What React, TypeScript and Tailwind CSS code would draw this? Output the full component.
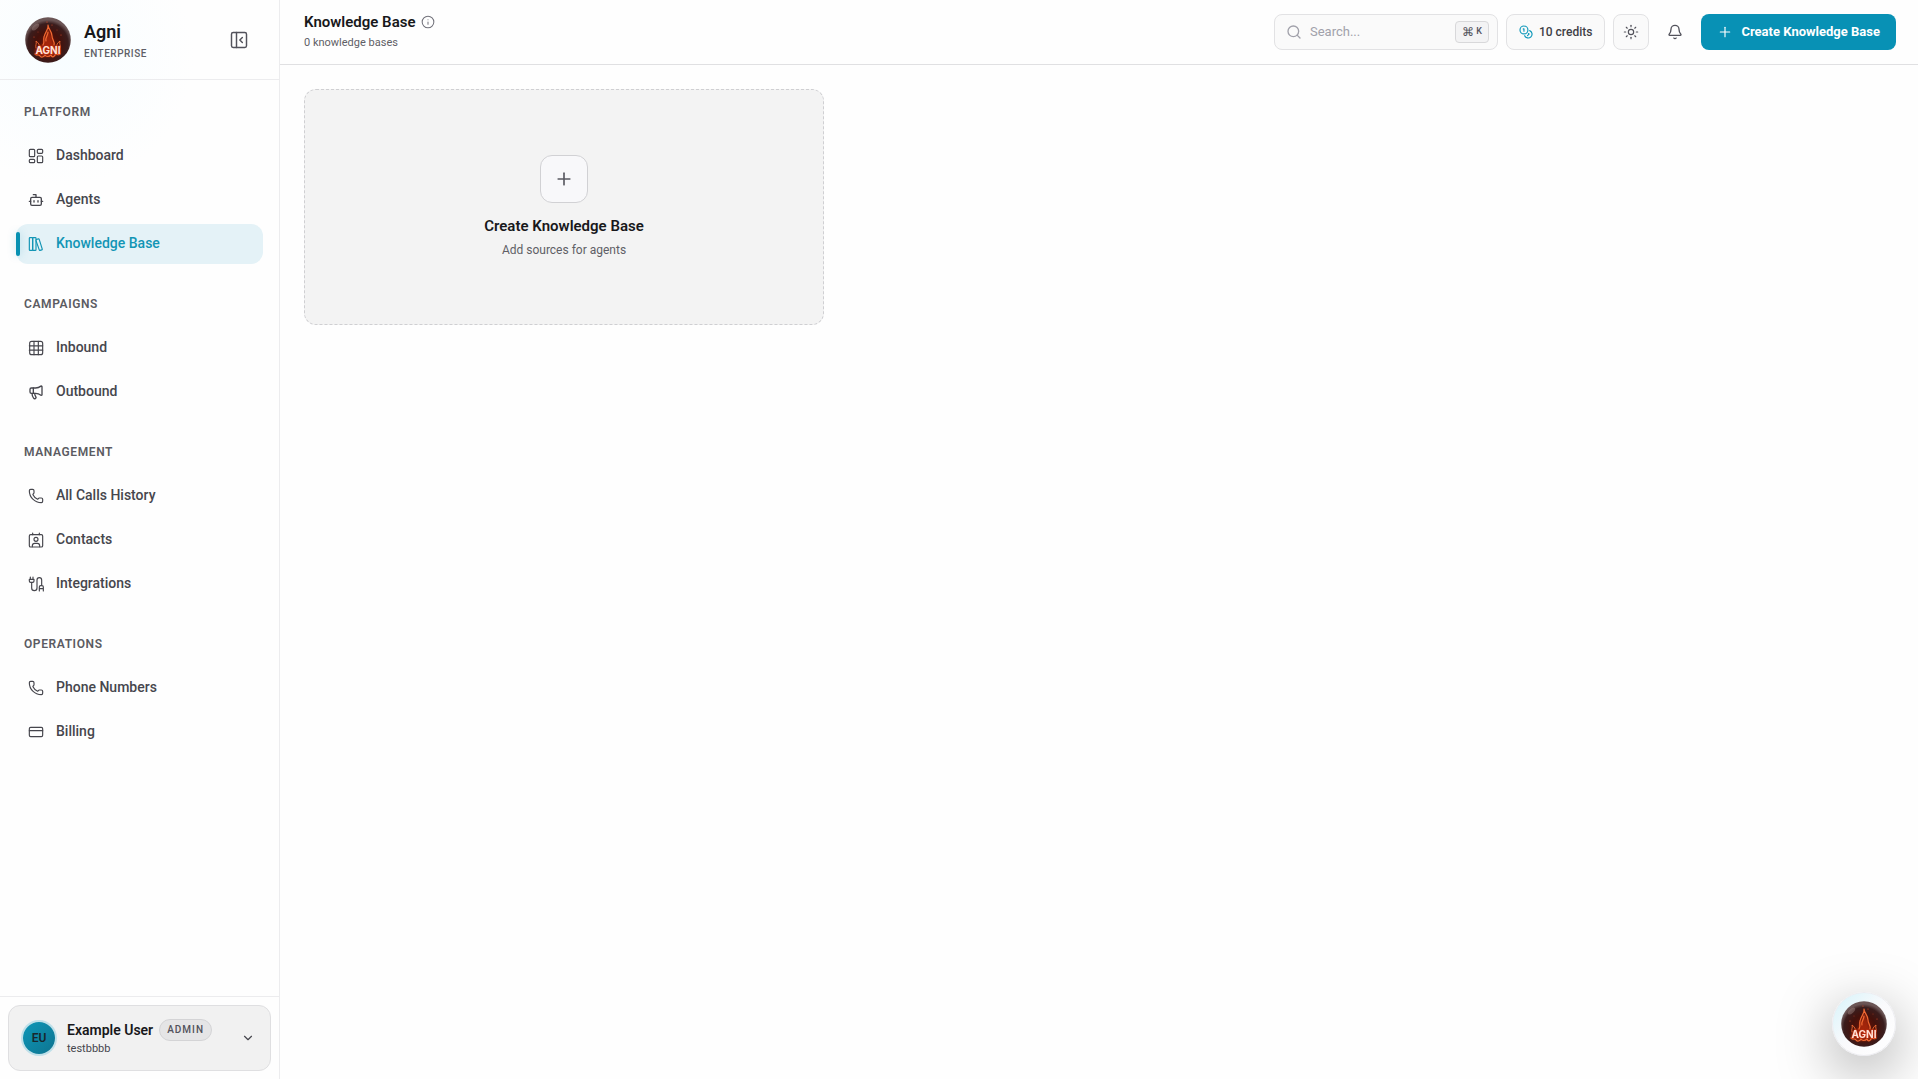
import type { ReactNode, SVGProps } from "react";
import { Bell, Bot, ChevronDown, CreditCard, Info, Megaphone, Phone, Plus, Search, Sun } from "lucide-react";

type IconProps = SVGProps<SVGSVGElement>;

function Glyph({ children, ...props }: IconProps) {
  return (
    <svg viewBox="0 0 24 24" fill="none" stroke="currentColor" strokeWidth={2} strokeLinecap="round" strokeLinejoin="round" aria-hidden="true" {...props}>
      {children}
    </svg>
  );
}

const DashboardIcon = (p: IconProps) => (
  <Glyph {...p}>
    <rect x="2" y="2" width="8" height="11" rx="1.5" />
    <rect x="14" y="2" width="8" height="6" rx="1.5" />
    <rect x="14" y="12" width="8" height="10" rx="1.5" />
    <rect x="2" y="17" width="8" height="5" rx="1.5" />
  </Glyph>
);
const BooksIcon = (p: IconProps) => (
  <Glyph {...p}>
    <rect x="2" y="2.5" width="5" height="19" rx="1" />
    <rect x="7" y="2.5" width="5" height="19" rx="1" />
    <path d="M12.3 5.2 15.6 4.3a1 1 0 0 1 1.2.7l4.6 14.6a1 1 0 0 1-.7 1.2l-2.6.7a1 1 0 0 1-1.2-.7L12 7" />
  </Glyph>
);
const GridIcon = (p: IconProps) => (
  <Glyph {...p}>
    <rect x="2.5" y="2" width="19.5" height="20" rx="3" />
    <path d="M9 2v20M15.5 2v20M2 8.7h20M2 15.3h20" />
  </Glyph>
);
const ContactIcon = (p: IconProps) => (
  <Glyph {...p}>
    <rect x="2" y="4" width="20" height="18.5" rx="2" />
    <path d="M7 1.5V4M17 1.5V4M6.5 22v-1.5a3.5 3.5 0 0 1 3.5-3.5h4a3.5 3.5 0 0 1 3.5 3.5V22" />
    <circle cx="12" cy="11" r="3" />
  </Glyph>
);
const CableIcon = (p: IconProps) => (
  <Glyph {...p}>
    <path d="M3.500 1.500V5M7.500 1.500V5M2 5h7v2.500a2 2 0 0 1-2 2H4a2 2 0 0 1-2-2zM5.500 9.500V18a4 4 0 0 0 8 0V6a3.500 3.500 0 0 1 7 0v8.500M17 22.500v-6a2 2 0 0 1 2-2h2a2 2 0 0 1 2 2v6M17 19h6" />
  </Glyph>
);
const PanelIcon = (p: IconProps) => (
  <Glyph {...p}>
    <rect x="3" y="3" width="18" height="18" rx="2" />
    <path d="M9 3v18M16 9l-3 3 3 3" />
  </Glyph>
);
const CoinsIcon = (p: IconProps) => (
  <Glyph {...p}>
    <circle cx="8.5" cy="8.5" r="6.8" />
    <path d="M7.3 6.7h1.2v4M18.3 9.6a6.6 6.6 0 1 1-8.6 8.7M16.2 14.6l1 .9-2.6 2.6" />
  </Glyph>
);

/* Round ember emblem: a dark red sphere, an outlined flame and the product name. */
function Emblem({ id, className }: { id: string; className: string }) {
  return (
    <svg viewBox="0 0 46 46" className={className} role="img" aria-label="Agni logo">
      <defs>
        <radialGradient id={id} cx="50%" cy="58%" r="52%">
          <stop offset="0" stopColor="#6b1408" />
          <stop offset="0.5" stopColor="#44110b" />
          <stop offset="0.85" stopColor="#3a1d1d" />
          <stop offset="1" stopColor="#6b5555" />
        </radialGradient>
        <filter id={id + "-glow"} x="-30%" y="-30%" width="160%" height="160%">
          <feGaussianBlur stdDeviation="1.2" />
        </filter>
      </defs>
      <circle cx="23" cy="23" r="22.8" fill={`url(#${id})`} />
      <ellipse cx="10.5" cy="10" rx="4.5" ry="2.2" fill="#a58a86" opacity="0.45" transform="rotate(-42 10.5 10)" />
      <path d="M10 37c-1-5 2-8 7-9 2-4 3-9 6-18 3 6 5 13 6 18 5 1 8 5 6 9-7 4-18 4-25 0z" fill="#e2380c" opacity="0.5" filter={`url(#${id}-glow)`} />
      <g fill="none" stroke="#f26a33" strokeWidth="1.2" strokeLinejoin="round" strokeLinecap="round">
        <path d="M23 8c1 4-3 7-4 12-1 4 1 5-1 8M23 8c0 4 4 6 4 11 0 4 3 5 2 9M23 15c0 4-3 5-2 9" />
        <path d="M11 31c-1-3 1-4 0-7 3 2 3 4 4 6M35 31c1-3-1-4 0-7-3 2-3 4-4 6" strokeWidth="0.9" />
        <path d="M10 37c2 2 4 0 5 2s4 1 5-1c1 2 4 2 6 0 1 3 3 2 4 0s4 1 5-1" />
      </g>
      <g fill="#e4502a">
        <circle cx="22" cy="5" r="0.6" /><circle cx="27" cy="8" r="0.5" /><circle cx="9" cy="20" r="0.5" />
        <circle cx="36" cy="18" r="0.5" /><circle cx="13" cy="15" r="0.4" /><circle cx="32" cy="13" r="0.4" />
      </g>
      <text x="23" y="36.5" textAnchor="middle" fontSize="10" fontWeight="700" fill="#ffe3d8" stroke="#c62f10" strokeWidth="1" paintOrder="stroke" className="font-[Inter]">AGNI</text>
    </svg>
  );
}

const ic = "size-4 shrink-0";
const groups: { title: string; items: { label: string; icon: ReactNode; active?: boolean }[] }[] = [
  {
    title: "PLATFORM",
    items: [
      { label: "Dashboard", icon: <DashboardIcon className={ic} strokeWidth={1.75} /> },
      { label: "Agents", icon: <Bot className={ic} strokeWidth={2} /> },
      { label: "Knowledge Base", icon: <BooksIcon className={ic} strokeWidth={1.75} />, active: true },
    ],
  },
  {
    title: "CAMPAIGNS",
    items: [
      { label: "Inbound", icon: <GridIcon className={ic} strokeWidth={1.75} /> },
      { label: "Outbound", icon: <Megaphone className={ic} strokeWidth={2} /> },
    ],
  },
  {
    title: "MANAGEMENT",
    items: [
      { label: "All Calls History", icon: <Phone className={ic} strokeWidth={1.75} /> },
      { label: "Contacts", icon: <ContactIcon className={ic} strokeWidth={1.75} /> },
      { label: "Integrations", icon: <CableIcon className={ic} strokeWidth={1.75} /> },
    ],
  },
  {
    title: "OPERATIONS",
    items: [
      { label: "Phone Numbers", icon: <Phone className={ic} strokeWidth={1.75} /> },
      { label: "Billing", icon: <CreditCard className={ic} strokeWidth={1.75} /> },
    ],
  },
];

function Sidebar() {
  return (
    <aside className="flex w-[280px] shrink-0 flex-col border-r border-[#ececee] bg-[radial-gradient(circle_at_64px_56px,#f8fdff_0,#fefefe_130px)]">
      <div className="flex h-20 items-center border-b border-[#ececee] pr-[30px] pl-6">
        <Emblem id="brand" className="size-12 shrink-0 p-px" />
        <div className="ml-3 flex-1">
          <p className="text-lg leading-7 font-semibold text-[#18181b]">Agni</p>
          <p className="text-[10px] leading-4 font-medium tracking-wider text-[#5f5f66]">ENTERPRISE</p>
        </div>
        <button aria-label="Collapse sidebar" className="text-[#52525b]">
          <PanelIcon className="size-5" strokeWidth={1.75} />
        </button>
      </div>
      <nav aria-label="Main" className="flex flex-1 flex-col gap-8 px-4 py-6">
        {groups.map((g) => (
          <section key={g.title}>
            <h2 className="mb-4 px-2 text-xs leading-4 font-semibold tracking-wider text-[#5b5b62]">{g.title}</h2>
            <ul className="flex flex-col gap-1">
              {g.items.map((item) => (
                <li key={item.label}>
                  <a
                    href="#"
                    aria-current={item.active ? "page" : undefined}
                    className={
                      item.active
                        ? "relative flex h-10 items-center gap-3 rounded-xl bg-[#e4f2f7] px-3 text-sm font-medium text-[#1295b5]"
                        : "flex h-10 items-center gap-3 rounded-xl px-3 text-sm font-medium text-[#46464d]"
                    }
                  >
                    {item.active && <span className="absolute top-2 bottom-2 left-0 w-1 rounded-full bg-[#0891b2] shadow-[0_0_8px_#0891b240]" />}
                    {item.icon}
                    <span className="pb-0.5">{item.label}</span>
                  </a>
                </li>
              ))}
            </ul>
          </section>
        ))}
      </nav>
      <div className="border-t border-[#ececee] p-2">
        <button className="flex h-[66px] w-full items-center rounded-xl border border-[#dfdfe1] bg-[#f1f1f1] pr-[15px] pl-3.5 text-left">
          <span className="flex size-8 shrink-0 items-center justify-center rounded-full bg-linear-to-br from-[#0c97b8] to-[#0e7490] text-xs font-semibold text-[#18272d] ring-2 ring-[#bfe0e9]">EU</span>
          <span className="ml-3 flex flex-1 flex-col">
            <span className="flex items-center gap-1.5">
              <span className="text-sm leading-5 font-semibold text-[#18181b]">Example User</span>
              <span className="rounded-full border border-[#d4d4d6] bg-[#e5e5e6] px-[7px] text-[10px] leading-5 font-medium tracking-widest text-[#52525b]">ADMIN</span>
            </span>
            <span className="text-[11px] leading-4 text-[#46464d]">testbbbb</span>
          </span>
          <ChevronDown className="size-3.5 text-[#46464d]" strokeWidth={2} />
        </button>
      </div>
    </aside>
  );
}

function Header() {
  return (
    <header className="flex h-[65px] items-center justify-between border-b border-[#e0e0e2] pr-[22px] pl-6">
      <div>
        <div className="flex items-center gap-1.5">
          <h1 className="text-[15px] leading-[22px] font-semibold text-[#18181b]">Knowledge Base</h1>
          <button aria-label="About knowledge bases" className="text-[#71717a]">
            <Info className="size-3.5" strokeWidth={1.75} />
          </button>
        </div>
        <p className="text-[11px] leading-5 text-[#5f5f66]">0 knowledge bases</p>
      </div>
      <div className="flex items-center gap-2">
        <label className="flex h-9 w-56 items-center gap-2 rounded-lg border border-[#e2e2e4] bg-[#fafafa] pr-2 pl-[11px]">
          <Search className="size-4 shrink-0 text-[#a1a1aa]" strokeWidth={2} />
          <input type="search" aria-label="Search" placeholder="Search..." className="min-w-0 flex-1 bg-transparent text-[13px] outline-none placeholder:text-[#a1a1aa]" />
          <kbd className="flex h-[22px] items-center gap-0.5 rounded-sm border border-[#d8d8da] bg-[#f3f3f4] px-1.5 font-[Roboto] text-[#52525b]">
            <span className="text-xs">⌘</span>
            <span className="text-[9px] font-medium">K</span>
          </kbd>
        </label>
        <button className="flex h-9 items-center gap-1.5 rounded-lg border border-[#e2e2e4] bg-[#fafafa] px-3 text-xs font-medium text-[#3f3f46]">
          <CoinsIcon className="size-3.5 text-[#0e98ba]" strokeWidth={2} />
          10 credits
        </button>
        <button aria-label="Toggle theme" className="flex size-9 items-center justify-center rounded-lg border border-[#e2e2e4] bg-[#fafafa] text-[#52525b]">
          <Sun className="size-4" strokeWidth={1.75} />
        </button>
        <button aria-label="Notifications" className="flex size-9 items-center justify-center text-[#52525b]">
          <Bell className="size-4" strokeWidth={2} />
        </button>
        <button className="flex h-9 items-center gap-2 rounded-lg bg-[#0891b5] px-4 text-[13px] font-bold text-white">
          <Plus className="size-4" strokeWidth={1.75} />
          Create Knowledge Base
        </button>
      </div>
    </header>
  );
}

export default function App() {
  return (
    <div className="flex min-h-screen bg-[#fefefe] font-[Roboto,sans-serif]">
      <Sidebar />
      <div className="flex min-w-0 flex-1 flex-col">
        <Header />
        <main className="grid grid-cols-3 gap-4 py-6 pr-[22px] pl-6">
          <button className="flex h-[236px] flex-col items-center justify-center rounded-xl border border-dashed border-[#cfcfd2] bg-[#f3f3f3]">
            <span className="flex size-12 items-center justify-center rounded-xl border border-[#d1d1d4] bg-[#f8f8fa] text-[#5a5a62]">
              <Plus className="size-5" strokeWidth={2} />
            </span>
            <span className="mt-3 text-[15px] leading-[22px] font-semibold text-[#18181b]">Create Knowledge Base</span>
            <span className="mt-1 text-xs leading-[18px] text-[#5f5f66]">Add sources for agents</span>
          </button>
        </main>
      </div>
      <button
        aria-label="Open Agni assistant"
        className="fixed right-[22px] bottom-[23px] flex size-16 items-center justify-center rounded-full border border-[#ececf0] bg-linear-to-br from-[#d5f3fa] via-[#fafafc] to-white shadow-[0_16px_56px_rgba(0,0,0,0.35)]"
      >
        <Emblem id="assistant" className="size-[46px]" />
      </button>
    </div>
  );
}
